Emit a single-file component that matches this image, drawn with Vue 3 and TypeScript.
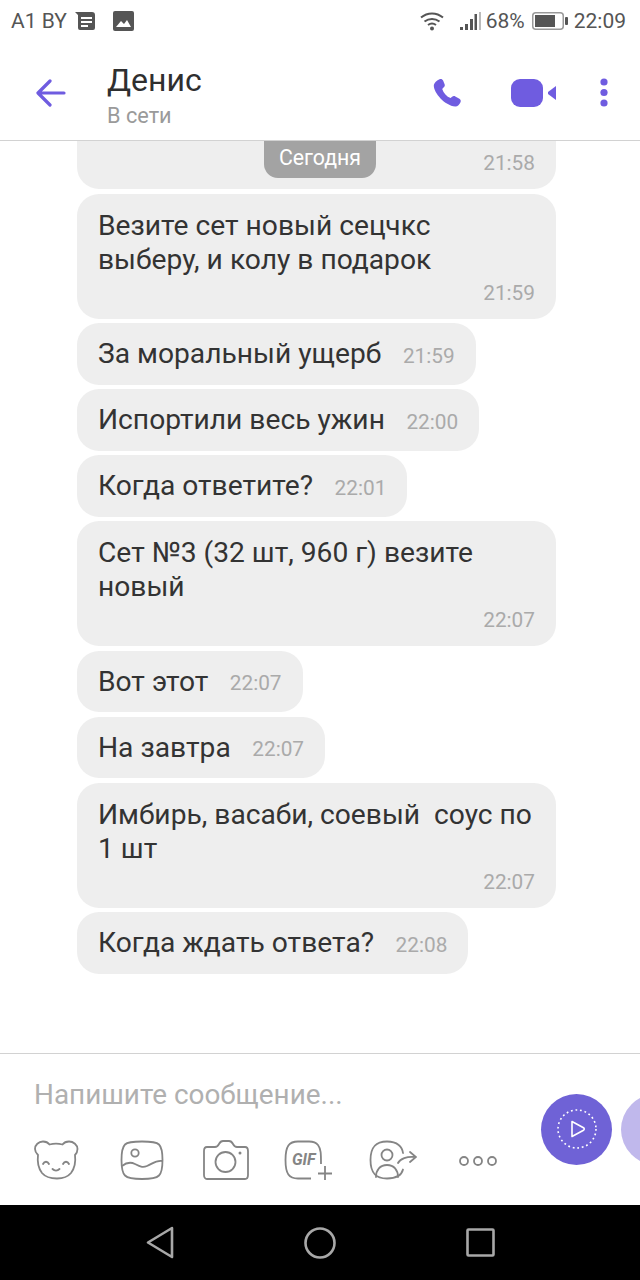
<script setup lang="ts">
interface Msg { text: string; time: string; wide?: boolean }
const messages: Msg[] = [
  { text: 'Везите сет новый сецчкс выберу, и колу в подарок', time: '21:59', wide: true },
  { text: 'За моральный ущерб', time: '21:59' },
  { text: 'Испортили весь ужин', time: '22:00' },
  { text: 'Когда ответите?', time: '22:01' },
  { text: 'Сет №3 (32 шт, 960 г) везите новый', time: '22:07', wide: true },
  { text: 'Вот этот', time: '22:07' },
  { text: 'На завтра', time: '22:07' },
  { text: 'Имбирь, васаби, соевый  соус по 1 шт', time: '22:07', wide: true },
  { text: 'Когда ждать ответа?', time: '22:08' },
]
</script>

<template>
  <div class="phone">
    <div class="status">
      <div class="status-left">
        <span class="carrier">A1 BY</span>
        <svg class="ic-news" width="22" height="20" viewBox="0 0 22 20"><path d="M1 1h17a3 3 0 0 1 3 3v13a2 2 0 0 1-2 2H6a2 2 0 0 1-2-2V4z" fill="#555"/><path d="M7 6h11v2H7zM7 10h11v2H7zM7 14h7v2H7z" fill="#fff"/></svg>
        <svg class="ic-pic" width="21" height="20" viewBox="0 0 21 20"><rect width="21" height="20" rx="2" fill="#555"/><path d="M3 16l5-6 3 3 3-4 4 7z" fill="#fff"/></svg>
      </div>
      <div class="status-right">
        <svg class="ic-wifi" width="24" height="20" viewBox="0 0 24 20" fill="none" stroke="#555" stroke-width="2"><path d="M1 6.500c6.500-5.500 15.500-5.500 22 0M4.500 10.500c4.500-3.500 10.500-3.500 15 0M8 14c2.500-1.800 5.500-1.800 8 0"/><circle cx="12" cy="17.500" r="2" fill="#555" stroke="none"/></svg>
        <svg class="ic-signal" width="21" height="20" viewBox="0 0 21 20"><path d="M0 16h3v3H0zM5 13h3v6H5zM10 8h3v11h-3zM14.500 3h2.500v16h-2.500z" fill="#555"/><path d="M19 1h2v18h-2z" fill="#bbb"/></svg>
        <span class="pct">68%</span>
        <svg class="ic-bat" width="36" height="18" viewBox="0 0 36 18"><rect x=".75" y=".75" width="30.500" height="16.500" rx="3" fill="none" stroke="#999" stroke-width="1.500"/><rect x="3" y="3" width="20" height="12" fill="#555"/><rect x="33" y="5" width="3" height="8" rx="1" fill="#555"/></svg>
        <span class="clock">22:09</span>
      </div>
    </div>

    <header class="bar">
      <svg class="back" width="30" height="28" viewBox="0 0 30 28" fill="none" stroke="#6f5ce0" stroke-width="3.200" stroke-linecap="round" stroke-linejoin="round"><path d="M14 2L2 14l12 12M2.500 14H28"/></svg>
      <div class="who">
        <div class="name">Денис</div>
        <div class="online">В сети</div>
      </div>
      <svg class="phone-ic" width="30" height="30" viewBox="0 0 30 30"><path d="M6.500 1.200c1.500-.7 3-.1 3.600 1.300l1.500 3.800c.4 1.100.2 2-.6 2.800l-1.800 1.800c1.300 4 4.500 7.600 8.400 9.200l1.500-1.300c1-.9 2.100-1 3.200-.4l4.100 2.400c1.300.8 1.700 2.100 1.100 3.400-.9 2-2.900 4.500-5.200 4.400C11.500 27.500 1 15 .8 7.800c0-2.800 3.400-5.800 5.700-6.600z" fill="#6f5ce0"/></svg>
      <svg class="video-ic" width="45" height="28" viewBox="0 0 45 28"><rect width="32" height="28" rx="9" fill="#6f5ce0"/><path d="M45 7v14l-8-6v-2z" fill="#6f5ce0"/></svg>
      <svg class="more-ic" width="8" height="30" viewBox="0 0 8 30"><circle cx="4" cy="4" r="3.600" fill="#6f5ce0"/><circle cx="4" cy="14.500" r="3.600" fill="#6f5ce0"/><circle cx="4" cy="25" r="3.600" fill="#6f5ce0"/></svg>
    </header>

    <main class="chat">
      <div class="today">Сегодня</div>
      <div class="bubble first"><span class="time">21:58</span></div>
      <div v-for="(m, i) in messages" :key="i" class="bubble" :class="m.wide ? 'wide' : 'short'">
        <span class="text">{{ m.text }}</span>
        <span class="time">{{ m.time }}</span>
      </div>
    </main>

    <footer class="composer">
      <div class="compose-main">
        <div class="placeholder">Напишите сообщение...</div>
        <div class="tools">
          <svg class="t-bear" width="46" height="40" viewBox="0 0 46 40" fill="none" stroke="#858585" stroke-width="1.800" stroke-linecap="round"><path d="M10 1.500c3 0 5 1 6.500 3 4-1 9-1 13 0 1.500-2 3.500-3 6.500-3 4.500 0 8.500 3.500 8.500 7.500 0 2.500-1 4.500-2.500 6 1 8-1 14-4 18-2.500 3-7 5.500-14 5.500S11.500 36 9 33c-3-4-5-10-4-18-1.500-1.500-3-3.500-3-6 0-4 3.500-7.500 8-7.500z"/><path d="M10 24c1.500-3 4.500-3 6 0M30 24c1.500-3 4.500-3 6 0M19.500 29c2 2 5 2 7 0"/></svg>
        <svg class="t-pic" width="44" height="40" viewBox="0 0 44 40" fill="none" stroke="#858585" stroke-width="1.800"><path d="M22 1.500c10 0 14.500.5 17 3s3.500 7.500 3.500 15.500-1 13-3.500 15.500-7 3.500-17 3.500-14.500-1-17-3.500S1.500 28 1.500 20 2.500 7 5 4.500s7-3 17-3z"/><circle cx="15" cy="13" r="3.700"/><path d="M2 26c5-4 9-4 13-2s7 4 12 2 9-6 15-5"/></svg>
        <svg class="t-cam" width="46" height="40" viewBox="0 0 46 40" fill="none" stroke="#858585" stroke-width="1.800"><path d="M4 7h8c2 0 3-1 4-3s2-3 4-3h6c2 0 3 1 4 3s2 3 4 3h8c2 0 3 2 3 4v24c0 2-1 4-3 4H4c-2 0-3-2-3-4V11c0-2 1-4 3-4z"/><circle cx="22.500" cy="22" r="10"/><circle cx="37" cy="13" r="1.500" fill="#858585" stroke="none"/></svg>
        <div class="t-gif">
          <svg width="50" height="40" viewBox="0 0 50 40" fill="none" stroke="#858585" stroke-width="1.800"><path d="M37 24c0-10.500 0-15-3-19-1.500-2-4-3.500-9-3.500H14C5 1.500 1.500 6 1.500 20S5 38.500 14 38.500h13"/><path d="M34 33.500h14M41 26v15"/></svg>
          <span class="gif-label">GIF</span>
        </div>
        <svg class="t-share" width="48" height="40" viewBox="0 0 48 40" fill="none" stroke="#858585" stroke-width="1.800" stroke-linecap="round"><path d="M34 13c-.7-6-5.500-11.500-16-11.500C6 1.500 1.500 8 1.500 20S6 38.500 18 38.500c10 0 14.500-3 16-9"/><circle cx="18" cy="15" r="5.500"/><path d="M7 37c0-7 4-12 11-12s11 5 11 12"/><path d="M29 23c2-4 9-7 17-6M41 12l6 5-6 5"/></svg>
        <svg class="t-more" width="40" height="12" viewBox="0 0 40 12" fill="none" stroke="#858585" stroke-width="1.800"><circle cx="6" cy="6" r="4"/><circle cx="20" cy="6" r="4"/><circle cx="34" cy="6" r="4"/></svg>
        </div>
      </div>
      <div class="fabs">
        <div class="fab">
          <svg width="42" height="42" viewBox="0 0 42 42" fill="none" stroke="#fff"><circle cx="21" cy="21" r="19" stroke-width="1.600" stroke-dasharray="1.800 2.800"/><path d="M16 13.500l11.500 6.300c1 .6 1 1.800 0 2.400L16 28.500z" stroke-width="1.600" stroke-linejoin="round"/></svg>
        </div>
        <div class="fab light"></div>
      </div>
    </footer>

    <nav class="sysnav">
      <svg width="28" height="33" viewBox="0 0 28 33" fill="none" stroke="#a8a8a8" stroke-width="2.600" stroke-linejoin="round"><path d="M26 2L2 16.500 26 31z"/></svg>
      <svg width="32" height="32" viewBox="0 0 32 32" fill="none" stroke="#a8a8a8" stroke-width="2.600"><circle cx="16" cy="16" r="14.500"/></svg>
      <svg width="29" height="29" viewBox="0 0 29 29" fill="none" stroke="#a8a8a8" stroke-width="2.600" stroke-linejoin="round"><rect x="1.500" y="1.500" width="26" height="26" rx="1"/></svg>
    </nav>
  </div>
</template>

<style>
html, body { margin: 0; background: #fff; }
</style>

<style scoped>
.phone {
  width: 640px;
  height: 1280px;
  display: flex;
  flex-direction: column;
  overflow: hidden;
  background: #fff;
  font-family: Roboto, "Noto Sans", sans-serif;
}
.status {
  height: 44px;
  box-sizing: border-box;
  flex: none;
  display: flex;
  align-items: center;
  justify-content: space-between;
  padding: 0 14px 2px 11px;
  color: #555;
  font-size: 21px;
}
.status-left, .status-right { display: flex; align-items: center; }
.ic-news { margin-left: 7px; }
.ic-pic { margin-left: 17px; }
.ic-signal { margin-left: 16px; }
.pct { margin-left: 5px; }
.ic-bat { margin-left: 7px; }
.clock { margin-left: 6px; }
.bar {
  height: 97px;
  box-sizing: border-box;
  flex: none;
  display: flex;
  align-items: center;
  padding: 1px 32px 0 36px;
  border-bottom: 1px solid #d2d2d2;
}
.who { margin-left: 41px; margin-top: 4px; flex: 1; }
.name { font-size: 32px; line-height: 36px; color: #2f2f2f; }
.online { font-size: 21.700px; line-height: 24px; margin-top: 6px; color: #9a9a9a; }
.phone-ic { margin-right: 48px; }
.video-ic { margin-right: 44px; }
.chat {
  flex: 1;
  min-height: 0;
  position: relative;
  overflow: hidden;
  display: flex;
  flex-direction: column;
  align-items: flex-start;
  gap: 4.500px;
  padding-left: 77px;
}
.today {
  position: absolute;
  left: 264px;
  top: -6px;
  width: 112px;
  height: 43px;
  padding-top: 5px;
  box-sizing: border-box;
  border-radius: 0 0 14px 14px;
  background: #a3a3a3;
  color: #fff;
  font-size: 21.300px;
  line-height: 36px;
  text-align: center;
  z-index: 1;
}
.bubble {
  background: #eeeeee;
  border-radius: 22px;
  box-sizing: border-box;
  color: #333;
  font-size: 28.200px;
  line-height: 34px;
  flex: none;
}
.text { white-space: pre-wrap; }
.first {
  width: 479px;
  height: 100px;
  margin-top: -52px;
  display: flex;
  align-items: flex-end;
  justify-content: flex-end;
  padding: 0 21px 14px;
}
.wide {
  width: 479px;
  height: 125px;
  padding: 15px 21px 0;
  display: flex;
  flex-direction: column;
}
.wide .time { align-self: flex-end; margin-top: 4px; }
.short {
  height: 61.500px;
  padding: 1px 21px 0;
  display: flex;
  align-items: center;
  gap: 21.500px;
}
.short .time { margin-top: 3px; }
.time { color: #aaaaaa; font-size: 20.800px; line-height: 24px; }
.composer {
  height: 152px;
  box-sizing: border-box;
  flex: none;
  display: flex;
  border-top: 1px solid #d2d2d2;
  overflow: hidden;
}
.compose-main { width: 540px; flex: none; padding-left: 34px; box-sizing: border-box; }
.placeholder { margin-top: 25px; font-size: 27.900px; line-height: 32px; color: #b0b0b0; }
.tools { display: flex; align-items: center; margin: 29px 0 0 -1px; height: 40px; }
.t-pic { margin-left: 41px; }
.t-cam { margin-left: 39px; }
.t-gif { margin-left: 35px; position: relative; height: 40px; }
.gif-label {
  position: absolute;
  left: 8px;
  top: 9px;
  font-size: 16px;
  line-height: 22px;
  font-weight: 700;
  font-style: italic;
  color: #858585;
}
.t-share { margin-left: 35px; }
.t-more { margin: 2px 0 0 41px; }
.fabs { display: flex; align-items: center; gap: 9px; margin: 40px 0 0 1px; height: 70px; flex: none; }
.fab {
  width: 71px;
  height: 71px;
  flex: none;
  border-radius: 50%;
  background: #6f62d6;
  display: flex;
  align-items: center;
  justify-content: center;
}
.light { background: #c0b8ec; }
.sysnav {
  height: 75px;
  flex: none;
  background: #000;
  display: flex;
  align-items: center;
  padding-left: 146px;
  padding-right: 145px;
  justify-content: space-between;
}
</style>
